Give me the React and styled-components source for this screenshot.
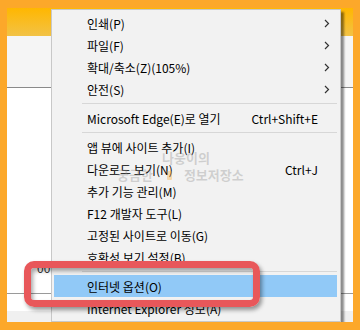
import styled, { createGlobalStyle } from 'styled-components';

const GlobalStyle = createGlobalStyle`
    body {
        margin: 0;
        font-family: "Noto Sans CJK KR", "Noto Sans", sans-serif;
    }
`

const Frame = styled.div`
    width: 360px;
    height: 330px;
    box-sizing: border-box;
    padding: 8px 7px 8px 7px;
    background: #fca82a;
`

const Viewport = styled.div`
    position: relative;
    height: 100%;
    overflow: hidden;
    background: #fff;
    display: flex;
    flex-direction: column;
`

const TopBar = styled.div`
    height: 28px;
    flex-shrink: 0;
    background: linear-gradient(#ffb700, #f2c246);
`

const Toolbar = styled.div`
    height: 51px;
    flex-shrink: 0;
    background: #f5f5f5;
    border-bottom: 1px solid #8a8a8a;
`

const PageBody = styled.div`
    height: 206px;
    flex-shrink: 0;
    box-sizing: border-box;
    padding: 171px 0 0 30px;
    border-bottom: 1px solid #9a9a9a;
    font-size: 12px;
    line-height: 17px;
    color: #333;
`

const PageFoot = styled.div`
    flex: 1;
    background: linear-gradient(#fff 60%, #f0f0f0 60%);
`

const Menu = styled.ul`
    position: absolute;
    left: 44px;
    top: 1px;
    width: 290px;
    margin: 0;
    padding: 2px 3px 2px 2px;
    list-style: none;
    background: #f2f2f2;
    border: 1px solid #c8c8c8;
    box-shadow: 3px 3px 2px rgba(0, 0, 0, 0.45);
    box-sizing: border-box;
    font-size: 12px;
    color: #000;
`

const Item = styled.li`
    height: 22px;
    display: flex;
    align-items: center;
    padding: 0 19px 0 33px;
    background: ${p => (p.$active ? '#91c9f7' : 'transparent')};
    white-space: nowrap;
`

const Label = styled.span`
    flex: 1;
`

const Shortcut = styled.span`
    text-align: right;
`

const Arrow = styled.svg`
    width: 6px;
    height: 9px;
    margin-right: -12px;
`

const Separator = styled.li`
    height: 7px;
    display: flex;
    align-items: center;
    padding-left: 28px;

    &::after {
        content: '';
        flex: 1;
        height: 1px;
        background: #d7d7d7;
    }
`

const Watermark = styled.div`
    position: absolute;
    left: ${p => p.$x}px;
    top: ${p => p.$y}px;
    font-size: 13px;
    font-weight: 700;
    color: rgba(140, 140, 140, 0.35);
    white-space: nowrap;
    pointer-events: none;
`

const Flag = styled.span`
    display: inline-block;
    width: 5px;
    height: 9px;
    margin: 0 12px 0 14px;
    background: rgba(255, 170, 40, 0.35);
    border-radius: 1px;
`

const Highlight = styled.div`
    position: absolute;
    left: 17px;
    top: 253px;
    width: 236px;
    height: 46px;
    box-sizing: border-box;
    border: 7px solid #e8575a;
    border-radius: 10px;
    box-shadow: 2px 3px 4px rgba(0, 0, 0, 0.4), inset 2px 3px 4px rgba(0, 0, 0, 0.35);
`

const items = [
    { label: '인쇄(P)', sub: true },
    { label: '파일(F)', sub: true },
    { label: '확대/축소(Z)(105%)', sub: true },
    { label: '안전(S)', sub: true },
    { sep: true },
    { label: 'Microsoft Edge(E)로 열기', key: 'Ctrl+Shift+E' },
    { sep: true },
    { label: '앱 뷰에 사이트 추가(I)' },
    { label: '다운로드 보기(N)', key: 'Ctrl+J' },
    { label: '추가 기능 관리(M)' },
    { label: 'F12 개발자 도구(L)' },
    { label: '고정된 사이트로 이동(G)' },
    { label: '호환성 보기 설정(B)' },
    { sep: true },
    { label: '인터넷 옵션(O)', active: true },
    { label: 'Internet Explorer 정보(A)' },
]

function App() {
    return (
        <>
            <GlobalStyle />
            <Frame>
                <Viewport>
                    <TopBar />
                    <Toolbar />
                    <PageBody>00</PageBody>
                    <PageFoot />

                    <Menu>
                        {items.map((it, i) =>
                            it.sep ? (
                                <Separator key={i} />
                            ) : (
                                <Item key={i} $active={it.active}>
                                    <Label>{it.label}</Label>
                                    {it.key && <Shortcut>{it.key}</Shortcut>}
                                    {it.sub && (
                                        <Arrow viewBox="0 0 6 9">
                                            <path d="M1 1 L4.5 4.5 L1 8" fill="none" stroke="#333" strokeWidth="1.2" />
                                        </Arrow>
                                    )}
                                </Item>
                            )
                        )}
                    </Menu>

                    <Watermark $x={155} $y={140}>나웅이의</Watermark>
                    <Watermark $x={110} $y={157}>
                        궁금한<Flag />정보저장소
                    </Watermark>

                    <Highlight />
                </Viewport>
            </Frame>
        </>
    )
}

export default App;
